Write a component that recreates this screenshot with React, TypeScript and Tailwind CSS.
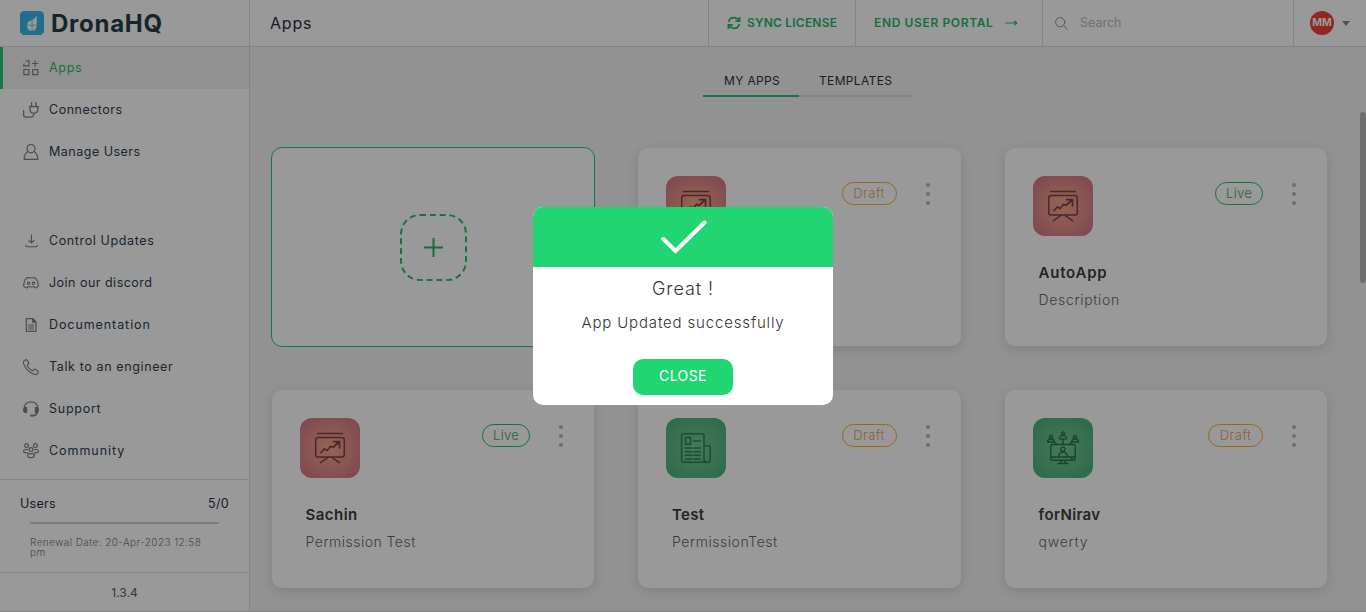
import React from "react";

const stroke = {
  fill: "none",
  stroke: "currentColor",
  strokeWidth: 1.2,
  strokeLinecap: "round" as const,
  strokeLinejoin: "round" as const,
};

function AppsIcon() {
  return (
    <svg width="16" height="16" viewBox="0 0 16 16" {...stroke} strokeLinecap="butt" strokeLinejoin="miter">
      <path d="M.9 3.500V5.900h5V.9H2.800M9 3.500h6.300M12.100.400v6.200" />
      <path d="M.9 9.500h5v5.200H.9zM9.700 9.500h5v5.200h-5z" />
    </svg>
  );
}

function PlugIcon() {
  return (
    <svg width="16" height="16" viewBox="0 0 16 16" {...stroke} strokeWidth="1.300">
      <path d="M8.600.6v3.600M13 .6v3.600M6.400 4.600h9M7 4.800v2.400c0 2.400 1.600 4 3.900 4s3.900-1.600 3.900-4V4.800M10.900 11.200c0 2.600-1.200 4-3.600 4H3.200c-1.700 0-2.600-.9-2.600-2.400V8.600" />
    </svg>
  );
}

function UserIcon() {
  return (
    <svg width="16" height="16" viewBox="0 0 16 16" {...stroke}>
      <ellipse cx="8" cy="4.600" rx="4" ry="4.200" />
      <path d="M4.900 7.600C2.600 9 1.200 11 1.200 15.400h13.600c0-4.400-1.400-6.400-3.700-7.800" />
    </svg>
  );
}

function DownloadIcon() {
  return (
    <svg width="16" height="16" viewBox="0 0 16 16" {...stroke} strokeWidth="1.100">
      <path d="M8.500 1.800v8M5.900 7.400l2.600 2.600 2.600-2.600M3 12.400v.9c0 .3.200.5.5.5h10c.3 0 .5-.2.5-.5v-.9" />
    </svg>
  );
}

function DiscordIcon() {
  return (
    <svg width="16" height="16" viewBox="0 0 16 16" {...stroke} strokeWidth="1.100">
      <path d="M3.400 3.300C5 2 6.600 2.800 8 2.800s3-.8 4.600.5C14.400 5 15.300 8 15.300 11.100c-1 1.200-2.300 1.900-3.400 1.900l-.8-1.500c-2 .6-4.200.6-6.200 0L4.100 13c-1.100 0-2.400-.7-3.400-1.900C.7 8 1.600 5 3.400 3.300z" />
      <circle cx="5.600" cy="8.300" r="1.200" />
      <circle cx="10.400" cy="8.300" r="1.200" />
    </svg>
  );
}

function DocIcon() {
  return (
    <svg width="16" height="16" viewBox="0 0 16 16" {...stroke}>
      <path d="M4.200 1.700h5.600l3.200 3.200v9.400H3.300V1.700z" />
      <path d="M9.700 1.700v3.400H13z" fill="currentColor" />
      <path d="M5.300 8h5.400M5.300 10h5.400M5.300 12h5.400" strokeWidth="1" />
    </svg>
  );
}

function PhoneIcon() {
  return (
    <svg width="16" height="16" viewBox="0 0 16 16" {...stroke} strokeWidth="1.100">
      <path d="M2 .9C.7 1.600.2 3 .6 4.600c1.300 4.900 5.900 9.500 10.800 10.800 1.600.4 3-.1 3.700-1.400.4-.7.300-1.300-.3-1.800l-2.200-1.700c-.6-.5-1.200-.4-1.700.1l-.9.900c-.4.400-.8.400-1.200.1-1.700-1.200-3.200-2.700-4.400-4.400-.3-.4-.3-.8.1-1.200l.9-.9c.5-.5.500-1.100.1-1.700L3.800 1.200C3.300.6 2.700.5 2 .9z" />
    </svg>
  );
}

function HeadsetIcon() {
  return (
    <svg width="16" height="16" viewBox="0 0 16 16" {...stroke} strokeWidth="1.300">
      <path d="M1.200 7C1.400 3.200 4.200.8 8 .8S14.600 3.200 14.800 7M14.300 11.500c-.4 1.800-1.600 2.900-4 3.100" />
      <path d="M4.200 6v6H2.600C1 11.800 0 10.700 0 9s1-2.800 2.600-3zM11.800 6v6h1.600c1.600-.2 2.600-1.300 2.600-3s-1-2.800-2.600-3z" fill="currentColor" stroke="none" />
      <ellipse cx="9" cy="14.600" rx="2" ry="1.200" fill="currentColor" stroke="none" />
    </svg>
  );
}

function CommunityIcon() {
  return (
    <svg width="16" height="16" viewBox="0 0 16 16" {...stroke}>
      <circle cx="3.600" cy="2.600" r="1.900" />
      <circle cx="12.400" cy="2.600" r="1.900" />
      <circle cx="8" cy="6.600" r="1.900" />
      <path d="M4.400 6.500H2.500C1.200 6.500.6 7.300.6 8.500c0 .8.500 1.200 1.200 1.200h2.800M11.600 6.500h1.900c1.300 0 1.900.8 1.900 2 0 .8-.5 1.200-1.200 1.200h-2.800M6.300 10.700h3.400c1.100 0 1.700.6 1.700 1.500 0 1.400-1.400 2.500-3.400 2.500s-3.400-1.100-3.400-2.500c0-.9.600-1.500 1.700-1.500z" />
    </svg>
  );
}

function LogoMark() {
  return (
    <svg width="24" height="24" viewBox="0 0 24 24">
      <rect width="24" height="24" rx="4.500" fill="#35b8ea" />
      <path d="M16.700 4.500v9.700a4.900 5 0 1 1-9.700 0c0-2 .9-3.300 2.400-3.900 3.200-1.300 5.800-3 7.300-5.800z" fill="#fff" />
      <path d="M12.100 9v11M6.500 14.200h10.400" stroke="#35b8ea" strokeWidth=".7" />
    </svg>
  );
}

function SyncIcon() {
  return (
    <svg width="14" height="14" viewBox="0 0 14 14" fill="none" stroke="currentColor" strokeWidth="1.700">
      <path d="M1.700 6C2.200 3.200 4.400 1.700 7 1.700c2 0 3.600.9 4.700 2.500M12.300 8c-.5 2.800-2.700 4.300-5.300 4.300-2 0-3.600-.9-4.700-2.500" />
      <path d="M12.600.9v4.300H8.300M1.400 13.100V8.800h4.300" />
    </svg>
  );
}

function PresentationArt() {
  return (
    <svg width="32" height="32" viewBox="0 0 32 32" fill="none" stroke="#7b4146" strokeWidth="1.500" strokeLinecap="round" strokeLinejoin="round">
      <path d="M3.500 1.500h25M14 25.500l-7.500 5.200M18 25.500l7.500 5.200" />
      <rect x="1.700" y="5.500" width="28.600" height="19.500" rx="2.600" />
      <path d="M7 20.500l3.500-3.600 2.600 1.600 3.600-4.400 2.200 1.400 6-5.500M19.600 9.700h5.900v6.300" strokeWidth="1.700" />
    </svg>
  );
}

function NewsArt() {
  return (
    <svg width="32" height="32" viewBox="0 0 32 32" fill="none" stroke="#2d8154" strokeWidth="1.500" strokeLinecap="round" strokeLinejoin="round">
      <path d="M24 27.500V3c0-.8-.5-1.300-1.300-1.300H3C2 1.700 1.600 2.200 1.600 3v25c0 1.400.9 2.300 2.300 2.300h23.600M24 13.700h4.800c.9 0 1.400.5 1.400 1.300v12.300c0 1.900-1 3-3 3s-3.200-1-3.200-2.800" />
      <path d="M5.600 5.600h5v6.600h-5zM14 9h6.300M5.500 16h6.400M14 16h6.300M5.500 19.700h6.400M14 19.700h6.300M5.500 23.300h6.400M14 23.300h6.300M5.500 27h6.400M14 27h6.300" />
    </svg>
  );
}

function MeetingArt() {
  return (
    <svg width="34" height="34" viewBox="-1 -1 34 34" fill="none" stroke="#26744a" strokeWidth="1.400" strokeLinecap="round" strokeLinejoin="round">
      <rect x="3.800" y="12.500" width="24.400" height="15.800" rx="1.600" />
      <path d="M3.800 25h24.400M14 28.500v3M18 28.500v3M11 31.500h10" />
      <circle cx="16" cy="17.200" r="2.100" />
      <path d="M11.500 25c.2-3.600 1.600-5 4.500-5s4.300 1.400 4.500 5M16 8v4.500M6.500 9.500l3.500 3M25.500 9.500l-3.500 3" />
      <path d="M12.400 6.500c0-2 1.200-2.900 3.600-2.900s3.600.9 3.600 2.900c-1 1-6.200 1-7.200 0zM.4 10c.2-1.800 1.400-3.300 3.400-3.300s3.400 1.500 3.600 3.300zM24.600 10c.2-1.800 1.400-3.300 3.400-3.300s3.400 1.500 3.600 3.300z" />
      <circle cx="16" cy="1.500" r="1.500" />
      <circle cx="4" cy="5" r="1.500" />
      <circle cx="28" cy="5" r="1.500" />
      <path d="M24 26.700h1.500" />
    </svg>
  );
}

function NavItem({ icon, label, tracking, active }: { icon: React.ReactNode; label: string; tracking: string; active?: boolean }) {
  return (
    <a
      className={
        active
          ? "flex h-[42px] items-center border-l-[3px] border-[#24c86e] bg-[#f2f2f2] pl-5 text-[#24b867]"
          : "flex h-[42px] items-center border-l-[3px] border-transparent pl-5 text-[#2c3e50]"
      }
    >
      <span className="mr-[10px] w-4 shrink-0 text-[#75848a]">{icon}</span>
      <span className={"pt-px text-[12.5px] " + tracking}>{label}</span>
    </a>
  );
}

type Card = { title: string; desc: string; status: "Live" | "Draft"; art: "chart" | "news" | "meet"; titleClass: string; descClass: string };

function AppCard({ card }: { card: Card }) {
  const live = card.status === "Live";
  return (
    <article className="h-[198px] rounded-[10px] bg-white pl-7 pt-7 shadow-[0_3px_12px_rgba(0,0,0,0.12)]">
      <div className="flex items-start">
        <div
          className={
            card.art === "chart"
              ? "flex size-[60px] items-center justify-center rounded-xl bg-[radial-gradient(circle,#f7a88a_0%,#e89189_45%,#cf7388_100%)]"
              : "flex size-[60px] items-center justify-center rounded-xl bg-[radial-gradient(circle,#78ca9a_0%,#62bd8a_45%,#45b079_100%)]"
          }
        >
          {card.art === "chart" ? <PresentationArt /> : card.art === "news" ? <NewsArt /> : <MeetingArt />}
        </div>
        <div className="ml-auto mt-[6px] flex items-start pr-[31px]">
          <span
            className={
              live
                ? "flex h-[23px] w-12 items-center justify-center rounded-full border border-[#24c06c] text-[13px] font-light tracking-[0.3px] text-[#45a56c]"
                : "flex h-[23px] w-[55px] items-center justify-center rounded-full border border-[#fbae2c] text-[13px] font-light tracking-[0.5px] text-[#e8a25c]"
            }
          >
            {card.status}
          </span>
          <span className="ml-[29px] mt-px flex flex-col gap-[5px]">
            <i className="size-1 rounded-full bg-[#b8b8b8]" />
            <i className="size-1 rounded-full bg-[#b8b8b8]" />
            <i className="size-1 rounded-full bg-[#b8b8b8]" />
          </span>
        </div>
      </div>
      <h3 className={"ml-[6px] mt-[26px] text-[15px] leading-[22px] font-semibold text-[#3c3c3c] " + card.titleClass}>{card.title}</h3>
      <p className={"ml-[6px] mt-[6px] text-sm leading-5 font-light text-[#666] " + card.descClass}>{card.desc}</p>
    </article>
  );
}

const cards: Card[] = [
  { title: "", desc: "", status: "Draft", art: "chart", titleClass: "", descClass: "" },
  { title: "AutoApp", desc: "Description", status: "Live", art: "chart", titleClass: "tracking-[0.75px]", descClass: "tracking-[0.65px]" },
  { title: "Sachin", desc: "Permission Test", status: "Live", art: "chart", titleClass: "tracking-[0.45px]", descClass: "tracking-[0.48px]" },
  { title: "Test", desc: "PermissionTest", status: "Draft", art: "news", titleClass: "tracking-[0.3px]", descClass: "tracking-[0.54px]" },
  { title: "forNirav", desc: "qwerty", status: "Draft", art: "meet", titleClass: "tracking-[0.35px]", descClass: "tracking-[0.75px]" },
];

export default function App() {
  return (
    <div className="relative flex h-[612px] w-full overflow-hidden bg-[#f3f3f3] font-[Inter,'Open_Sans',sans-serif] text-[#2c3e50]">
      <aside className="flex w-[250px] shrink-0 flex-col border-r border-b border-[#dcdcdc] bg-white">
        <div className="flex h-[47px] shrink-0 items-center gap-[7px] border-b border-[#dcdcdc] pl-5">
          <LogoMark />
          <span className="pt-px text-[24px] leading-none font-bold tracking-[0.75px] text-[#263c4a]">DronaHQ</span>
        </div>
        <nav>
          <NavItem icon={<AppsIcon />} label="Apps" tracking="tracking-[0.7px]" active />
          <NavItem icon={<PlugIcon />} label="Connectors" tracking="tracking-[0.5px]" />
          <NavItem icon={<UserIcon />} label="Manage Users" tracking="tracking-[0.5px]" />
        </nav>
        <nav className="mt-[47px]">
          <NavItem icon={<DownloadIcon />} label="Control Updates" tracking="tracking-[0.62px]" />
          <NavItem icon={<DiscordIcon />} label="Join our discord" tracking="tracking-[0.48px]" />
          <NavItem icon={<DocIcon />} label="Documentation" tracking="tracking-[0.92px]" />
          <NavItem icon={<PhoneIcon />} label="Talk to an engineer" tracking="tracking-[0.62px]" />
          <NavItem icon={<HeadsetIcon />} label="Support" tracking="tracking-[0.75px]" />
          <NavItem icon={<CommunityIcon />} label="Community" tracking="tracking-[0.95px]" />
        </nav>
        <section className="mt-[7px] h-[93px] border-t border-[#dcdcdc] px-5 pt-[14px]">
          <div className="flex justify-between text-[12.5px] leading-5 tracking-[0.3px] text-[#2c2f45]">
            <span>Users</span>
            <span>5/0</span>
          </div>
          <div className="mx-[10px] mt-2 h-[2px] bg-[#ccd4d1]" />
          <p className="ml-[10px] mt-[13px] text-[10px] leading-[10px] font-light tracking-[0.42px] text-[#777]">
            Renewal Date: 20-Apr-2023 12:58
            <br />
            pm
          </p>
        </section>
        <footer className="flex flex-1 items-center justify-center border-t border-[#dcdcdc] pt-[2px] text-xs text-[#4b6064]">1.3.4</footer>
      </aside>

      <main className="flex min-w-0 flex-1 flex-col border-b border-[#dcdcdc]">
        <header className="flex h-[47px] shrink-0 border-b border-[#dcdcdc] bg-white">
          <h1 className="flex flex-1 items-center pl-5 text-base tracking-[0.8px] text-[#2c3040]">Apps</h1>
          <button className="flex w-[147px] items-center border-l border-[#dcdcdc] pl-[18px] text-xs font-semibold tracking-[0.2px] text-[#24b867]">
            <SyncIcon />
            <span className="ml-[6px]">SYNC LICENSE</span>
          </button>
          <button className="flex w-[187px] items-center border-l border-[#dcdcdc] pl-[18px] text-xs font-semibold tracking-[0.63px] text-[#24b867]">
            END USER PORTAL
            <svg className="ml-[12px]" width="13" height="8" viewBox="0 0 13 8" {...stroke}>
              <path d="M.7 4h11M9.600 2.200L11.800 4 9.600 5.800" />
            </svg>
          </button>
          <div className="flex w-[251px] items-center border-l border-[#dcdcdc] pl-3">
            <svg className="text-[#909090]" width="13" height="13" viewBox="0 0 13 13" {...stroke} strokeWidth="1">
              <circle cx="5.200" cy="5.200" r="4.600" />
              <path d="M8.600 8.600l3.800 3.800" />
            </svg>
            <span className="ml-[12px] pt-px text-[12.5px] text-[#b8bcbc]">Search</span>
          </div>
          <div className="flex w-[73px] items-center border-l border-[#dcdcdc] pl-4">
            <span className="flex size-6 items-center justify-center rounded-full bg-[#f04438] text-[10.5px] font-bold text-white">MM</span>
            <svg className="ml-2" width="8" height="5" viewBox="0 0 8 5">
              <path d="M0 0h8L4 5z" fill="#8a8a8a" />
            </svg>
          </div>
        </header>

        <div className="ml-[453px] mt-[22px] flex h-[28px] w-[209px] text-xs leading-6 text-[#2f2f38]">
          <span className="w-24 border-b-2 border-[#24c86e] pl-[21px] tracking-[0.35px]">MY APPS</span>
          <span className="flex-1 border-b-2 border-[#e0e0e0] pl-5 tracking-[0.35px]">TEMPLATES</span>
        </div>

        <div className="ml-[21.600px] mr-[38.900px] mt-[51px] grid grid-cols-3 gap-11">
          <div className="-m-px flex h-[200px] items-center justify-center rounded-[11px] border border-[#24c86e] bg-white">
            <div className="ml-px mt-px flex size-[67px] items-center justify-center rounded-[20px] border-2 border-dashed border-[#24c06c]">
              <svg width="19" height="19" viewBox="0 0 19 19" fill="none" stroke="#24b867" strokeWidth="2">
                <path d="M9.500 0v19M0 9.500h19" />
              </svg>
            </div>
          </div>
          {cards.map((card, index) => (
            <AppCard key={index} card={card} />
          ))}
        </div>
      </main>

      <div className="absolute right-0 top-[112px] h-[171px] w-[6px] rounded-full bg-[#b8b8b8]" />

      <div className="absolute inset-0 flex items-start justify-center bg-black/40 pt-[207px]">
        <div className="flex h-[198px] w-[300px] flex-col items-center overflow-hidden rounded-[10px] bg-white" role="dialog">
          <div className="flex h-[60px] w-full shrink-0 items-center justify-center bg-[#21d573]">
            <svg className="ml-px" width="46" height="34" viewBox="0 0 46 34" fill="none" stroke="#fff" strokeWidth="4" strokeLinecap="round" strokeLinejoin="miter">
              <path d="M2.300 19L14.500 31 43.500 2.500" />
            </svg>
          </div>
          <h2 className="mt-2 text-lg leading-7 font-light tracking-[0.9px] text-[#333]">Great !</h2>
          <p className="mt-2 text-[15px] leading-6 font-light tracking-[0.84px] text-[#333]">App Updated successfully</p>
          <button className="mt-6 h-9 w-[100px] rounded-[10px] bg-[#21d573] pb-[2px] text-sm tracking-[0.4px] text-white">CLOSE</button>
        </div>
      </div>
    </div>
  );
}
